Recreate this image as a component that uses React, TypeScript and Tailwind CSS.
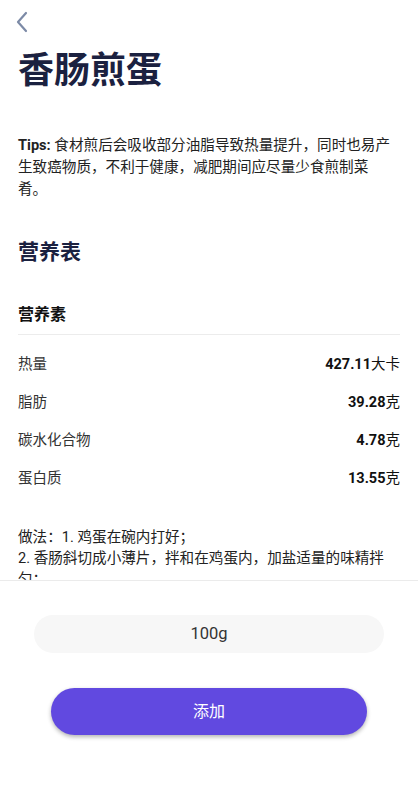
import React from "react";

const nutrients = [
  { name: "热量", value: "427.11", unit: "大卡" },
  { name: "脂肪", value: "39.28", unit: "克" },
  { name: "碳水化合物", value: "4.78", unit: "克" },
  { name: "蛋白质", value: "13.55", unit: "克" },
];

export default function App() {
  return (
    <div
      className="w-[418px] h-[800px] bg-white flex flex-col overflow-hidden"
      style={{ fontFamily: "Roboto, 'Noto Sans CJK SC', sans-serif" }}
    >
      <div className="h-[580px] overflow-hidden px-[18px]">
        <div className="h-[44px] flex items-center">
          <svg width="14" height="22" viewBox="0 0 14 22" className="-ml-[3px]">
            <path d="M11 2 L3 11 L11 20" fill="none" stroke="#7c8aa6" strokeWidth="2.2" strokeLinecap="round" strokeLinejoin="round" />
          </svg>
        </div>
        <h1 className="text-[36px] leading-[52px] font-bold text-[#1b2140] mt-[1px]">香肠煎蛋</h1>

        <p className="mt-[37px] pr-[6px] text-[14.6px] leading-[22px] text-[#222]">
          <span className="font-bold">Tips:</span>{" "}
          食材煎后会吸收部分油脂导致热量提升，同时也易产生致癌物质，不利于健康，减肥期间应尽量少食煎制菜肴。
        </p>

        <h2 className="mt-[37px] text-[21px] leading-[30px] font-semibold text-[#1b2140]">营养表</h2>

        <div className="mt-[36px] pb-[7px] border-b border-[#ececec]">
          <h3 className="text-[16px] leading-[24px] font-bold text-[#111]">营养素</h3>
        </div>

        <div className="pt-[19px] flex flex-col gap-[16px]">
          {nutrients.map((n) => (
            <div key={n.name} className="flex justify-between items-center h-[22px] text-[14.5px]">
              <span className="text-[#333]">{n.name}</span>
              <span className="text-[#111]">
                <span className="font-bold">{n.value}</span>
                {n.unit}
              </span>
            </div>
          ))}
        </div>

        <p className="mt-[37px] text-[14.6px] leading-[21px] text-[#222]">
          做法：1. 鸡蛋在碗内打好；
          <br />
          2. 香肠斜切成小薄片，拌和在鸡蛋内，加盐适量的味精拌匀；
          <br />
          3. 锅内放油烧热，倒入鸡蛋液，煎至两面金黄即可。
        </p>
      </div>

      <div className="border-t border-[#ebebeb] flex-1 flex flex-col items-center">
        <div className="mt-[34px] w-[350px] h-[38px] rounded-full bg-[#f7f7f7] flex items-center justify-center text-[16.5px] text-[#333]">
          100g
        </div>
        <button className="mt-[35px] w-[316px] h-[47px] rounded-full bg-[#6149e0] text-white text-[16px] shadow-[0_2px_4px_rgba(0,0,0,0.3)]">
          添加
        </button>
      </div>
    </div>
  );
}
